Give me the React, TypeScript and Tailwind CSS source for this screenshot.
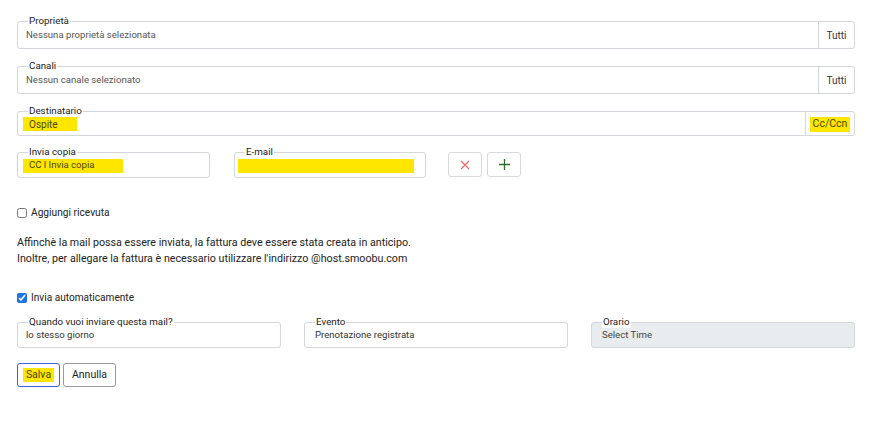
import React from "react";

const font = { fontFamily: 'Roboto, "Liberation Sans", Arial, sans-serif' };

function Field({
  label,
  children,
  className = "",
  labelClass = "bg-white",
}: {
  label: string;
  children: React.ReactNode;
  className?: string;
  labelClass?: string;
}) {
  return (
    <div className={`relative rounded-[3px] border border-[#d3d6da] ${className}`}>
      <span
        className={`absolute left-[10px] top-[-7px] px-[1px] text-[9.8px] leading-[12px] text-[#222] ${labelClass}`}
      >
        {label}
      </span>
      {children}
    </div>
  );
}

const HL = "bg-[#ffe600] text-[#4a4700]";

export default function App() {
  return (
    <div className="min-h-[424px] w-[873px] bg-white text-[#555]" style={font}>
      <div className="ml-[17px] w-[838px] pt-[21px]">
        {/* Proprietà */}
        <Field label="Proprietà" className="flex h-[28px]">
          <div className="flex flex-1 items-center pl-[8px] pt-[1px] text-[9.6px] text-[#555]">
            Nessuna proprietà selezionata
          </div>
          <div className="flex w-[36px] items-center justify-center border-l border-[#d3d6da] text-[10px] text-[#333]">
            Tutti
          </div>
        </Field>

        {/* Canali */}
        <Field label="Canali" className="mt-[17px] flex h-[28px]">
          <div className="flex flex-1 items-center pl-[8px] pt-[1px] text-[9.6px] text-[#555]">
            Nessun canale selezionato
          </div>
          <div className="flex w-[36px] items-center justify-center border-l border-[#d3d6da] text-[10px] text-[#333]">
            Tutti
          </div>
        </Field>

        {/* Destinatario */}
        <Field label="Destinatario" className="mt-[17px] flex h-[25px]">
          <div className="flex flex-1 items-center pl-[5px] pt-[1px]">
            <span className={`flex h-[14px] w-[54px] items-center pl-[6px] text-[10px] ${HL}`}>
              Ospite
            </span>
          </div>
          <div className="flex w-[49px] items-center justify-center border-l border-[#d3d6da] pt-[1px]">
            <span className={`flex h-[15px] items-center px-[3px] text-[10.5px] ${HL}`}>Cc/Ccn</span>
          </div>
        </Field>

        {/* Invia copia row */}
        <div className="mt-[16px] flex items-start">
          <Field label="Invia copia" className="flex h-[26px] w-[193px] items-center pl-[5px] pt-[1px]">
            <span className={`flex h-[14px] w-[100px] items-center pl-[6px] text-[9.6px] ${HL}`}>
              CC l Invia copia
            </span>
          </Field>
          <Field label="E-mail" className="ml-[24px] flex h-[26px] w-[192px] items-center pl-[3px] pt-[1px]">
            <span className={`h-[14px] w-[176px] ${HL}`}></span>
          </Field>
          <button className="ml-[22px] flex h-[25px] w-[34px] items-center justify-center rounded-[3px] border border-[#d8dadd] bg-white">
            <svg width="10" height="10" viewBox="0 0 10 10">
              <path d="M1 1 L9 9 M9 1 L1 9" stroke="#f06a6a" strokeWidth="1.3" fill="none" />
            </svg>
          </button>
          <button className="ml-[5px] flex h-[25px] w-[34px] items-center justify-center rounded-[3px] border border-[#d8dadd] bg-white">
            <svg width="11" height="11" viewBox="0 0 11 11">
              <path d="M5.5 0 V11 M0 5.5 H11" stroke="#2f6a2f" strokeWidth="1.3" fill="none" />
            </svg>
          </button>
        </div>

        {/* Aggiungi ricevuta */}
        <label className="mt-[28px] flex items-center gap-[4px] text-[10.2px] leading-[14px] text-[#222]">
          <input type="checkbox" className="m-0 h-[10px] w-[10px]" />
          Aggiungi ricevuta
        </label>

        <div className="mt-[15px] text-[10.7px] leading-[16px] text-[#222]">
          <div>Affinchè la mail possa essere inviata, la fattura deve essere stata creata in anticipo.</div>
          <div>Inoltre, per allegare la fattura è necessario utilizzare l'indirizzo @host.smoobu.com</div>
        </div>

        <label className="mt-[24px] flex items-center gap-[4px] text-[10.1px] leading-[14px] text-[#222]">
          <input type="checkbox" defaultChecked className="m-0 h-[10px] w-[10px] accent-[#1a73e8]" />
          Invia automaticamente
        </label>

        <div className="mt-[17px] grid grid-cols-3 gap-[23px]">
          <Field label="Quando vuoi inviare questa mail?" className="flex h-[26px] items-center pl-[8px] pt-[1px]">
            <span className="text-[9.6px] text-[#333]">lo stesso giorno</span>
          </Field>
          <Field label="Evento" className="flex h-[26px] items-center pl-[10px] pt-[1px]">
            <span className="text-[9.6px] text-[#333]">Prenotazione registrata</span>
          </Field>
          <Field label="Orario" className="flex h-[26px] items-center bg-[#e9ecef] pl-[10px] pt-[1px]">
            <span className="text-[9.6px] text-[#444]">Select Time</span>
          </Field>
        </div>

        <div className="mt-[15px] flex gap-[3px]">
          <button className="flex h-[24px] w-[43px] items-center justify-center rounded-[3px] border border-[#3d5fe0] bg-white">
            <span className={`px-[3px] text-[10.5px] leading-[14px] ${HL}`}>Salva</span>
          </button>
          <button className="flex h-[24px] w-[53px] items-center justify-center rounded-[3px] border border-[#9a9a9a] bg-white text-[10.5px] text-[#222]">
            Annulla
          </button>
        </div>
      </div>
    </div>
  );
}
